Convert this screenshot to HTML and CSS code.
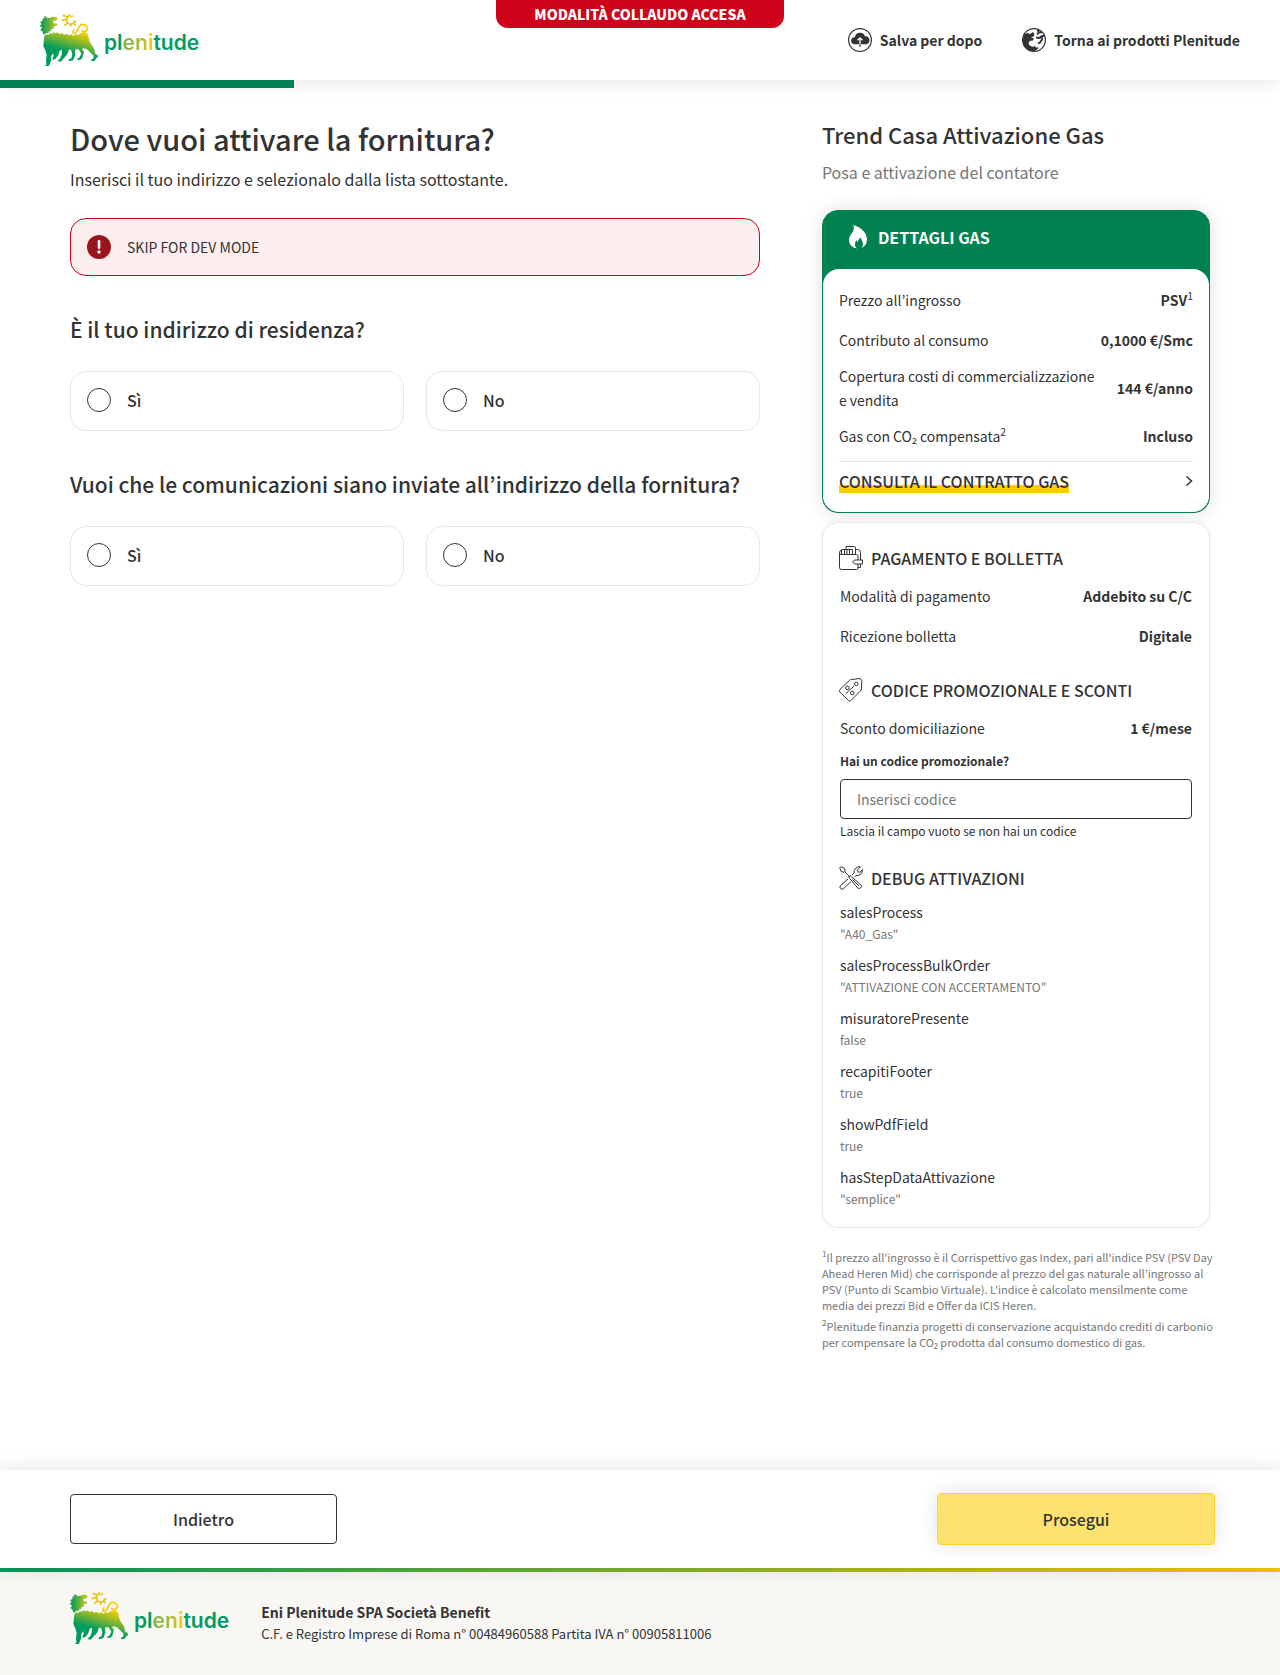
FILE: index.html
```html
<!DOCTYPE html>
<html lang="it">
<head>
<meta charset="utf-8">
<meta name="viewport" content="width=device-width, initial-scale=1">
<title>Plenitude - Dove vuoi attivare la fornitura?</title>
<link rel="stylesheet" href="styles.css">
</head>
<body>
<svg class="defs" aria-hidden="true">
  <defs>
    <linearGradient id="bodyFill" gradientUnits="userSpaceOnUse" x1="235" y1="92" x2="215" y2="160">
      <stop offset="0" stop-color="#fdd000"/><stop offset="1" stop-color="#009b5f"/>
    </linearGradient>
    <linearGradient id="headFill" gradientUnits="userSpaceOnUse" x1="128" y1="0" x2="174" y2="0">
      <stop offset="0" stop-color="#149f5c"/><stop offset="1" stop-color="#d5cc12"/>
    </linearGradient>
    <symbol id="lion" viewBox="120 42 174 156">
      <path fill="url(#headFill)" d="M134 47l8 7 9-1 7-3 13 1 1 9-9 2-5 3 4 5 10 1-2 6-9 2 2 5-9 4-1 6-5 0-3 5-7 0-5 6-5-6-1-5-6-3 5-8-7-6 6-5-5-5 8-5-1-5 5-2z"/>
      <path fill="url(#bodyFill)" d="M133 108l8-5 4 2 5-6 6 3 5-5 6 3 6-3 6 5 7-3 6 5 8-3 6 5 8-3 6 4 8-4 7 2 8-7 10-2c10 2 12 10 14 20 3 15 11 20 15 30l4 15 7 4 2 7-5 1-6 9-9 2-3-4 7-4 2-9-20-19-12-4-2 5 5 7-5 17-6 6-8 1-2-4 7-3 6-12-8-13-8 0-3 3 1 13-6 16-9 3-6-1 2-4 7-3 3-12-4-14-6 0-6 15-11 12-8 9-6-1-4-2 8-6 6-15 0-12-7 3-4 14-8 10-6 3-5-1 5-9-1-9-6 7-1 15-5 13-5 8-9 1-2-4 7-6-1-14 2-14-3-12-7-16z"/>
      <path fill="none" stroke="#fcc900" stroke-width="5" stroke-linecap="round" d="M222 90c-6 6-3 12 4 9 9-4 9-26 21-26 9 0 17 7 15 15-2 7-10 9-17 4"/>
      <path fill="none" stroke="#e4c313" stroke-width="5" d="M207 50c-8-2-10 15-3 20 8 5 18 2 19-7M205 51l-17-5M201 56l-16 6M203 69l-10 8M211 71l2 9M218 68l9 7M222 63l7 2M206 51l2-9M211 49l8-1"/>
    </symbol>
  </defs>
</svg>

<header class="topbar">
  <a class="logo" href="#" aria-label="Plenitude">
    <svg class="logo-lion" aria-hidden="true"><use href="#lion"/></svg>
    <span class="logo-word">pl<span class="logo-eni">eni</span>tude</span>
  </a>
  <nav class="topnav">
    <a href="#">
      <svg class="icon" viewBox="0 0 24 24" aria-hidden="true">
        <circle cx="12" cy="12" r="11.4" fill="none" stroke="#333" stroke-width="1.2"/>
        <path fill="#333" d="M6.500 16.200a3.500 3.500 0 0 1 .3-7A5.300 5.300 0 0 1 17 8.200a4 4 0 0 1 .9 8z"/>
        <path fill="none" stroke="#fff" stroke-width="1.300" d="M12 16.200V9.800M9.500 12.300L12 9.800l2.500 2.500"/>
        <path fill="none" stroke="#333" stroke-width="1.200" d="M12 16.200v2.800"/>
      </svg>
      Salva per dopo
    </a>
    <a href="#">
      <svg class="icon" viewBox="0 0 24 24" aria-hidden="true">
        <circle cx="12" cy="12" r="11.400" fill="none" stroke="#333" stroke-width="1.200"/>
        <path fill="#333" d="M2 6.500L5 5l3 1 3-2 1.500 2-1 2.500-2.500 1 3 1-1 2-3.500.5-1 3 2 2 3.500 1 1 3-2 1.500-5-1.500-4-4-1.500-5z"/>
        <path fill="none" stroke="#333" stroke-width="1.900" d="M15.800 1.500l.8 3.200 3.600-.7M16.600 4.700l-1.600 1.600M14 9.500l3.500.5 2-1.800 3-.2M19.500 8.200l.6 3.300-2.300 3.300-2 .6"/>
        <path fill="#333" d="M12.500 17.500l1.500 2 3 0-3 3-4 .5z"/>
      </svg>
      Torna ai prodotti Plenitude
    </a>
  </nav>
  <div class="test-badge">MODALITÀ COLLAUDO ACCESA</div>
</header>
<div class="progress" role="progressbar" aria-valuenow="23" aria-valuemin="0" aria-valuemax="100" aria-label="Avanzamento"><div class="progress-fill" style="width:23%"></div></div>

<main class="layout">
  <form class="address" id="address-form">
    <h1>Dove vuoi attivare la fornitura?</h1>
    <p class="lead">Inserisci il tuo indirizzo e selezionalo dalla lista sottostante.</p>
    <div class="alert">
      <svg class="icon" viewBox="0 0 24 24" aria-hidden="true"><circle cx="12" cy="12" r="12" fill="#9b141c"/><path d="M12 6.200v6.600" stroke="#fff" stroke-width="2.600" stroke-linecap="round"/><circle cx="12" cy="17" r="1.700" fill="#fff"/></svg>
      <span>SKIP FOR DEV MODE</span>
    </div>
    <fieldset>
      <legend>È il tuo indirizzo di residenza?</legend>
      <div class="options">
        <label class="option"><input type="radio" name="residenza" value="si"><span>Sì</span></label>
        <label class="option"><input type="radio" name="residenza" value="no"><span>No</span></label>
      </div>
    </fieldset>
    <fieldset>
      <legend>Vuoi che le comunicazioni siano inviate all’indirizzo della fornitura?</legend>
      <div class="options">
        <label class="option"><input type="radio" name="comunicazioni" value="si"><span>Sì</span></label>
        <label class="option"><input type="radio" name="comunicazioni" value="no"><span>No</span></label>
      </div>
    </fieldset>
  </form>

  <aside class="summary">
    <h2>Trend Casa Attivazione Gas</h2>
    <p class="subtitle">Posa e attivazione del contatore</p>

    <section class="gas-card">
      <h3 class="gas-title">
        <svg class="flame" viewBox="0 0 18 24" aria-hidden="true"><path fill="#fff" d="M4.500 0C11 2 18 7 18 14.500c0 4-2 7-5.500 8.500 1.500-2 2-4 1-6.200-.6-1.300-1.500-2-1.200-4.300-2.300 1-3.300 2.600-3.500 4.500-.8-.3-1.200-1-1.200-2-2 2.500-2.500 6 .4 8.500C3 22.500 0 19.500 0 15 0 9 6.500 7.500 4.500 0z"/></svg>
        DETTAGLI GAS
      </h3>
      <div class="gas-body">
        <dl class="rows">
          <div class="row"><dt>Prezzo all’ingrosso</dt><dd>PSV<sup>1</sup></dd></div>
          <div class="row"><dt>Contributo al consumo</dt><dd>0,1000 €/Smc</dd></div>
          <div class="row"><dt>Copertura costi di commercializzazione e vendita</dt><dd>144 €/anno</dd></div>
          <div class="row"><dt>Gas con CO₂ compensata<sup>2</sup></dt><dd>Incluso</dd></div>
        </dl>
        <a class="contract" href="#">
          <span>CONSULTA IL CONTRATTO GAS</span>
          <svg class="chevron" viewBox="0 0 8 12" aria-hidden="true"><path d="M1.500 1.500L6.500 6l-5 4.500" fill="none" stroke="#333" stroke-width="1.500"/></svg>
        </a>
      </div>
    </section>

    <section class="info-card">
      <h3>
        <svg class="icon line-icon" viewBox="0 0 24 24" aria-hidden="true"><path d="M2.500 8.500h15a1.500 1.500 0 0 1 1.500 1.500v4M19 18v4a1.500 1.500 0 0 1-1.500 1.500h-15A2 2 0 0 1 .5 21.500V6.500a2 2 0 0 1 2-2M.5 7a2 2 0 0 0 2 1.500V3.500h11v5M5.500 3.500v5M8 3.500v5M10.500 3.500v5M7 3.500v-3h8.500a1 1 0 0 1 1 1v7M16.500 3.500h2a3 3 0 0 1 3 3v7.500M13.500 16l2-2h8v4h-8zM21.500 18v3.500H19"/></svg>
        PAGAMENTO E BOLLETTA
      </h3>
      <dl class="rows inset">
        <div class="row"><dt>Modalità di pagamento</dt><dd>Addebito su C/C</dd></div>
        <div class="row"><dt>Ricezione bolletta</dt><dd>Digitale</dd></div>
      </dl>
      <h3>
        <svg class="icon line-icon" viewBox="0 0 24 24" aria-hidden="true"><path d="M12.500 1.500L20 .6a2.500 2.500 0 0 1 2.800 2.700L22.400 11a3 3 0 0 1-1 2l-9.500 9.500a1.800 1.800 0 0 1-2.500 0L.9 14a1.800 1.800 0 0 1 0-2.500L10.500 2.300a3 3 0 0 1 2-.8zM7 15.500L15 8"/><circle cx="17.300" cy="5.900" r="1.800"/><circle cx="8.300" cy="9.800" r="1.800"/><circle cx="13.300" cy="15" r="1.800"/></svg>
        CODICE PROMOZIONALE E SCONTI
      </h3>
      <dl class="rows inset">
        <div class="row"><dt>Sconto domiciliazione</dt><dd>1 €/mese</dd></div>
      </dl>
      <div class="promo inset">
        <label for="promo-code">Hai un codice promozionale?</label>
        <input id="promo-code" type="text" placeholder="Inserisci codice" aria-describedby="promo-hint">
        <small id="promo-hint">Lascia il campo vuoto se non hai un codice</small>
      </div>
      <h3>
        <svg class="icon line-icon" viewBox="0 0 24 24" aria-hidden="true"><path d="M.7 1.800L2 .7l3.500 1.500L6.300 5 5 6.300 2.200 5.500zM5.700 5.700l5.300 5.300M11 9.500l10.800 9.300a2.200 2.200 0 0 1-3 3.200L9.500 11zM13.500 13.500l6.500 6.500M13 9l2-2a5.500 5.500 0 0 1 6.500-6.200l-3 3 .5 2 2 .5 2.500-2.800A5.500 5.500 0 0 1 17 9.500l-1.500 1.700M9 13l-7.500 6.500a2.200 2.200 0 0 0 3 3.200L12 15.500"/></svg>
        DEBUG ATTIVAZIONI
      </h3>
      <dl class="debug inset">
        <div><dt>salesProcess</dt><dd>"A40_Gas"</dd></div>
        <div><dt>salesProcessBulkOrder</dt><dd>"ATTIVAZIONE CON ACCERTAMENTO"</dd></div>
        <div><dt>misuratorePresente</dt><dd>false</dd></div>
        <div><dt>recapitiFooter</dt><dd>true</dd></div>
        <div><dt>showPdfField</dt><dd>true</dd></div>
        <div><dt>hasStepDataAttivazione</dt><dd>"semplice"</dd></div>
      </dl>
    </section>

    <div class="notes">
      <p><sup>1</sup>Il prezzo all’ingrosso è il Corrispettivo gas Index, pari all'indice PSV (PSV Day Ahead Heren Mid) che corrisponde al prezzo del gas naturale all’ingrosso al PSV (Punto di Scambio Virtuale). L'indice è calcolato mensilmente come media dei prezzi Bid e Offer da ICIS Heren.</p>
      <p><sup>2</sup>Plenitude finanzia progetti di conservazione acquistando crediti di carbonio per compensare la CO₂ prodotta dal consumo domestico di gas.</p>
    </div>
  </aside>
</main>

<div class="actions">
  <button class="btn btn-back" type="button">Indietro</button>
  <button class="btn btn-next" type="submit" form="address-form">Prosegui</button>
</div>

<footer class="footer">
  <a class="logo" href="#" aria-label="Plenitude">
    <svg class="logo-lion" aria-hidden="true"><use href="#lion"/></svg>
    <span class="logo-word">pl<span class="logo-eni">eni</span>tude</span>
  </a>
  <div class="company">
    <strong>Eni Plenitude SPA Società Benefit</strong>
    <span>C.F. e Registro Imprese di Roma n° 00484960588 Partita IVA n° 00905811006</span>
  </div>
</footer>
</body>
</html>
```

FILE: styles.css
```css
*, *::before, *::after { box-sizing: border-box; }

body {
  margin: 0;
  min-height: 100vh;
  display: flex;
  flex-direction: column;
  font-family: "Noto Sans CJK KR", "Noto Sans", sans-serif;
  font-size: 14px;
  line-height: 24px;
  color: #333;
  background: #fff;
}

h1, h2, h3, p, dl, dd, fieldset, legend { margin: 0; padding: 0; }
h1, h2, h3, legend { font-weight: 500; }
a { color: inherit; text-decoration: none; }
sup { font-size: 75%; line-height: 0; vertical-align: super; }

.defs { position: absolute; width: 0; height: 0; }
.icon { width: 24px; height: 24px; flex: none; }

/* header */
.topbar {
  position: relative;
  z-index: 1;
  display: flex;
  align-items: center;
  justify-content: space-between;
  height: 80px;
  padding: 0 40px;
  background: #fff;
  box-shadow: 0 0 20px rgba(0, 0, 0, .12);
}
.logo { display: flex; align-items: center; gap: 6px; }
.logo-lion { width: 58px; height: 52px; }
.logo-word {
  padding-top: 6px;
  font-family: Inter, sans-serif;
  font-weight: 600;
  font-size: 21px;
  color: #009b64;
}
.logo-eni {
  color: transparent;
  background: linear-gradient(90deg, #7fb34c, #a9bb38 60%, #fdd000);
  -webkit-background-clip: text;
  background-clip: text;
}
.topnav { display: flex; gap: 40px; }
.topnav a { display: flex; align-items: center; gap: 8px; font-weight: 700; }
.test-badge {
  position: absolute;
  top: 0;
  left: 50%;
  transform: translateX(-50%);
  width: 288px;
  height: 28px;
  line-height: 28px;
  border-radius: 0 0 12px 12px;
  background: #d0021b;
  color: #fff;
  font-weight: 900;
  text-align: center;
}
.progress { position: relative; z-index: 2; height: 8px; }
.progress-fill { height: 100%; background: #008250; }

/* content */
.layout {
  display: grid;
  grid-template-columns: minmax(0, 16fr) minmax(0, 9fr);
  column-gap: 62px;
  padding: 30px 70px 120px;
}
h1 { font-size: 29px; line-height: 40px; }
.lead { margin: 9px 0 27px; font-size: 16px; }
.alert {
  display: flex;
  align-items: center;
  gap: 16px;
  height: 58px;
  padding: 0 16px;
  border: 1px solid #d0021b;
  border-radius: 16px;
  background: #fcedee;
}
fieldset { min-width: 0; border: 0; margin-top: 37px; }
legend { margin-bottom: 26px; font-size: 21px; line-height: 32px; }
.options { display: grid; grid-template-columns: 1fr 1fr; gap: 22px; }
.option {
  display: flex;
  align-items: center;
  gap: 16px;
  height: 60px;
  padding: 0 16px 2px;
  border: 1px solid #e8e8e8;
  border-radius: 16px;
  font-size: 16px;
  font-weight: 500;
}
.option input {
  appearance: none;
  width: 24px;
  height: 24px;
  margin: 0;
  border: 1px solid #333;
  border-radius: 50%;
}
.option input:checked { border-width: 7px; }

/* summary */
h2 { font-size: 22px; line-height: 32px; }
.subtitle { margin: 10px 0 26px; font-size: 16px; color: #767676; }
.gas-card {
  border: 1px solid #008250;
  border-radius: 16px;
  background: #008250;
  box-shadow: 0 0 20px rgba(0, 0, 0, .12);
}
.gas-title {
  display: flex;
  align-items: center;
  gap: 11px;
  padding: 14px 26px 20px;
  font-size: 16px;
  font-weight: 700;
  color: #fff;
}
.flame { width: 18px; height: 24px; }
.gas-body { padding: 11px 16px 19px; border-radius: 16px; background: #fff; }
.row {
  display: flex;
  align-items: center;
  justify-content: space-between;
  gap: 16px;
  min-height: 40px;
  padding: 4px 0;
}
.row dd { font-weight: 700; white-space: nowrap; }
.row sup { font-weight: 400; }
.contract {
  display: flex;
  align-items: center;
  justify-content: space-between;
  margin-top: 5px;
  padding-top: 7px;
  border-top: 1px solid #e8e8e8;
  font-size: 16px;
  font-weight: 500;
}
.contract span { background: linear-gradient(#fc0, #fc0) left bottom / 100% 8px no-repeat; }
.chevron { width: 8px; height: 12px; }

.info-card {
  margin-top: 9px;
  padding: 23px 16px 18px;
  border: 1px solid #e8e8e8;
  border-radius: 16px;
  background: #fff;
  box-shadow: 0 0 6px rgba(0, 0, 0, .06);
}
.info-card h3 { display: flex; align-items: center; gap: 8px; font-size: 16px; }
.line-icon { fill: none; stroke: #333; stroke-width: 1; }
.inset { margin: 6px 1px 22px; }
.promo { display: flex; flex-direction: column; margin-top: -19px; margin-bottom: 25px; }
.promo label { font-size: 12px; line-height: 20px; font-weight: 700; }
.promo input {
  height: 40px;
  margin: 8px 0 2px;
  padding: 0 16px;
  border: 1px solid #333;
  border-radius: 4px;
  font: inherit;
  color: #333;
}
.promo input::placeholder { color: #767676; }
.promo small { font-size: 12px; line-height: 20px; }
.debug { display: grid; gap: 9px; margin-top: 10px; margin-bottom: 0; }
.debug dd { font-size: 12px; line-height: 20px; color: #767676; }
.notes { margin: 21px -8px 0 0; font-size: 11px; line-height: 16px; color: #767676; }
.notes p + p { margin-top: 5px; }

/* bottom bar */
.actions {
  position: relative;
  display: flex;
  align-items: center;
  justify-content: space-between;
  padding: 23px 65px 23px 70px;
  background: #fff;
  box-shadow: 0 0 20px rgba(0, 0, 0, .12);
}
.btn {
  border-radius: 4px;
  font-family: inherit;
  font-size: 16px;
  font-weight: 500;
  color: #333;
}
.btn-back { width: 267px; height: 50px; border: 1px solid #333; background: #fff; }
.btn-next {
  width: 278px;
  height: 52px;
  border: 1px solid #ffd333;
  background: #fde270;
  box-shadow: 0 0 20px rgba(0, 0, 0, .12);
}

/* footer */
.footer {
  flex: 1;
  display: flex;
  align-items: flex-start;
  gap: 32px;
  padding: 20px 70px 31px;
  border-top: 4px solid;
  border-image: linear-gradient(90deg, #009b5f, #fdc800) 1;
  background: #f8f7f3;
}
.company { display: flex; flex-direction: column; padding-top: 8px; }
.company strong { font-weight: 700; }
.company span { font-size: 13px; line-height: 20px; }
```
